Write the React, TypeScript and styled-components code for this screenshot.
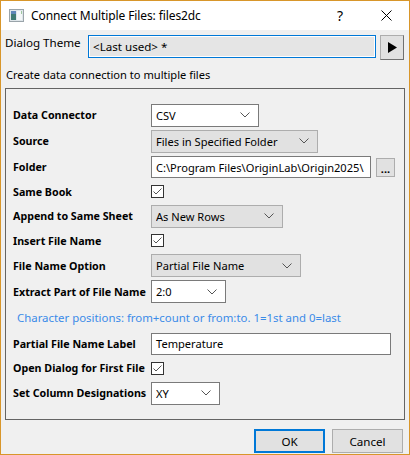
import React from "react";
import styled, { createGlobalStyle } from "styled-components";

const Global = createGlobalStyle`
  html, body { margin: 0; padding: 0; background: #fff; }
  body { font-family: "Noto Sans", "Open Sans", sans-serif; font-size: 11.1px; color: #000; }
`;

const Win = styled.div`
  width: 410px;
  height: 455px;
  box-sizing: border-box;
  border: 1px solid #d8962a;
  background: #f0f0f0;
  display: flex;
  flex-direction: column;
`;

const TitleBar = styled.div`
  height: 29px;
  background: #fff;
  display: flex;
  align-items: center;
  padding-left: 8px;
`;

const TitleText = styled.div`
  margin-left: 7px;
  font-size: 12px;
  flex: 1;
  letter-spacing: -0.1px;
`;

const TitleBtn = styled.div<{ $w: number }>`
  width: ${(p) => p.$w}px;
  display: flex;
  justify-content: center;
  align-items: center;
  font-size: 14px;
`;

const Body = styled.div`
  flex: 1;
  display: flex;
  flex-direction: column;
  padding: 5px 4px 0 4px;
`;

const ThemeRow = styled.div`
  display: flex;
  align-items: flex-start;
  height: 26px;
`;

const ThemeLabel = styled.div`
  width: 83px;
  padding-top: 0px;
  font-size: 11.6px;
`;

const ThemeCombo = styled.div`
  width: 288px;
  height: 23px;
  box-sizing: border-box;
  border: 1px solid #0078d7;
  padding: 1px;
  background: #fff;
  display: flex;
`;

const ThemeInner = styled.div`
  flex: 1;
  background: #e5e5e5;
  display: flex;
  align-items: center;
  padding-left: 3px;
  font-size: 11.6px;
`;

const PlayBtn = styled.div`
  margin-left: 4px;
  width: 24px;
  height: 25px;
  box-sizing: border-box;
  border: 1px solid #adadad;
  border-right-color: #707070;
  border-bottom-color: #707070;
  background: #e1e1e1;
  display: flex;
  align-items: center;
  justify-content: center;
`;

const Caption = styled.div`
  height: 26px;
  display: flex;
  align-items: center;
  padding-left: 1px;
`;

const Panel = styled.fieldset`
  margin: 0;
  margin-top: 1px;
  width: 400px;
  height: 332px;
  box-sizing: border-box;
  border: 1px solid #646464;
  padding: 13px 0 0 7px;
  display: flex;
  flex-direction: column;
`;

const Row = styled.div<{ $h: number }>`
  height: ${(p) => p.$h}px;
  display: flex;
  align-items: center;
`;

const Label = styled.div`
  width: 138px;
  flex-shrink: 0;
  font-weight: bold;
  font-size: 10.7px;
  white-space: nowrap;
`;

const Hint = styled.div`
  color: #3b8be8;
  padding-left: 4px;
  font-size: 11.4px;
  white-space: nowrap;
`;

const Combo = styled.div<{ $w: number; $white?: boolean }>`
  width: ${(p) => p.$w}px;
  height: 23px;
  box-sizing: border-box;
  border: 1px solid ${(p) => (p.$white ? "#7a7a7a" : "#adadad")};
  background: ${(p) => (p.$white ? "#fff" : "#e1e1e1")};
  display: flex;
  align-items: center;
  padding: 0 8px 0 4px;
`;

const ComboText = styled.div`
  flex: 1;
  white-space: nowrap;
  overflow: hidden;
`;

const TextBox = styled.div<{ $w: number }>`
  width: ${(p) => p.$w}px;
  height: 22px;
  box-sizing: border-box;
  border: 1px solid #7a7a7a;
  background: #fff;
  display: flex;
  align-items: center;
  padding-left: 4px;
  white-space: nowrap;
  overflow: hidden;
`;

const Dots = styled.div`
  margin-left: 5px;
  width: 19px;
  height: 19px;
  box-sizing: border-box;
  border: 1px solid #adadad;
  background: #e1e1e1;
  display: flex;
  align-items: flex-end;
  justify-content: center;
  font-weight: bold;
  font-size: 11px;
  line-height: 14px;
`;

const Check = styled.div`
  width: 13px;
  height: 13px;
  box-sizing: border-box;
  border: 1px solid #333;
  background: #fff;
  display: flex;
  align-items: center;
  justify-content: center;
`;

const Footer = styled.div`
  display: flex;
  justify-content: flex-end;
  gap: 7px;
  padding: 9px 2px 0 0;
`;

const Button = styled.div<{ $def?: boolean }>`
  width: 71px;
  height: 24px;
  box-sizing: border-box;
  border: ${(p) => (p.$def ? "2px solid #0078d7" : "1px solid #adadad")};
  background: #e1e1e1;
  display: flex;
  align-items: center;
  justify-content: center;
  font-size: 11.6px;
`;

const Chevron = () => (
  <svg width="10" height="6" viewBox="0 0 10 6">
    <path d="M0.5 0.5 L5 5 L9.5 0.5" fill="none" stroke="#555" strokeWidth="1" />
  </svg>
);

const Tick = () => (
  <svg width="11" height="11" viewBox="0 0 11 11">
    <path d="M1.5 5.5 L4 8 L9.5 2.5" fill="none" stroke="#555" strokeWidth="1" />
  </svg>
);

const Dropdown = ({ w, text, white }: { w: number; text: string; white?: boolean }) => (
  <Combo $w={w} $white={white}>
    <ComboText>{text}</ComboText>
    <Chevron />
  </Combo>
);

const AppIcon = () => (
  <svg width="15" height="13" viewBox="0 0 15 13">
    <rect x="0.5" y="0.5" width="14" height="12" fill="#dfe6ea" stroke="#9aa4aa" />
    <rect x="2" y="2" width="5" height="9" fill="#3f7a73" />
    <rect x="2" y="2" width="5" height="3" fill="#5e86b8" />
    <rect x="8" y="2" width="5" height="9" fill="#f4f7f8" />
    <rect x="12" y="2" width="1" height="3" fill="#9ec7a0" />
  </svg>
);

export default function App() {
  return (
    <>
      <Global />
      <Win>
        <TitleBar>
          <AppIcon />
          <TitleText>Connect Multiple Files: files2dc</TitleText>
          <TitleBtn $w={46}>?</TitleBtn>
          <TitleBtn $w={46}>
            <svg width="11" height="11" viewBox="0 0 11 11">
              <path d="M0.5 0.5 L10.5 10.5 M10.5 0.5 L0.5 10.5" stroke="#000" strokeWidth="1" />
            </svg>
          </TitleBtn>
        </TitleBar>
        <Body>
          <ThemeRow>
            <ThemeLabel>Dialog Theme</ThemeLabel>
            <ThemeCombo>
              <ThemeInner>&lt;Last used&gt; *</ThemeInner>
            </ThemeCombo>
            <PlayBtn>
              <svg width="9" height="11" viewBox="0 0 9 11">
                <path d="M0 0 L9 5.5 L0 11 Z" fill="#000" />
              </svg>
            </PlayBtn>
          </ThemeRow>
          <Caption>Create data connection to multiple files</Caption>
          <Panel>
            <Row $h={26}>
              <Label>Data Connector</Label>
              <Dropdown w={108} text="CSV" white />
            </Row>
            <Row $h={26}>
              <Label>Source</Label>
              <Dropdown w={167} text="Files in Specified Folder" />
            </Row>
            <Row $h={26}>
              <Label>Folder</Label>
              <TextBox $w={220}>C:\Program Files\OriginLab\Origin2025\</TextBox>
              <Dots>...</Dots>
            </Row>
            <Row $h={23}>
              <Label>Same Book</Label>
              <Check><Tick /></Check>
            </Row>
            <Row $h={26}>
              <Label>Append to Same Sheet</Label>
              <Dropdown w={132} text="As New Rows" />
            </Row>
            <Row $h={23}>
              <Label>Insert File Name</Label>
              <Check><Tick /></Check>
            </Row>
            <Row $h={27}>
              <Label>File Name Option</Label>
              <Dropdown w={150} text="Partial File Name" />
            </Row>
            <Row $h={25}>
              <Label>Extract Part of File Name</Label>
              <Dropdown w={75} text="2:0" white />
            </Row>
            <Row $h={27}>
              <Hint>Character positions: from+count or from:to. 1=1st and 0=last</Hint>
            </Row>
            <Row $h={25}>
              <Label>Partial File Name Label</Label>
              <TextBox $w={240}>Temperature</TextBox>
            </Row>
            <Row $h={24}>
              <Label>Open Dialog for First File</Label>
              <Check><Tick /></Check>
            </Row>
            <Row $h={26}>
              <Label>Set Column Designations</Label>
              <Dropdown w={69} text="XY" white />
            </Row>
          </Panel>
          <Footer>
            <Button $def>OK</Button>
            <Button>Cancel</Button>
          </Footer>
        </Body>
      </Win>
    </>
  );
}
